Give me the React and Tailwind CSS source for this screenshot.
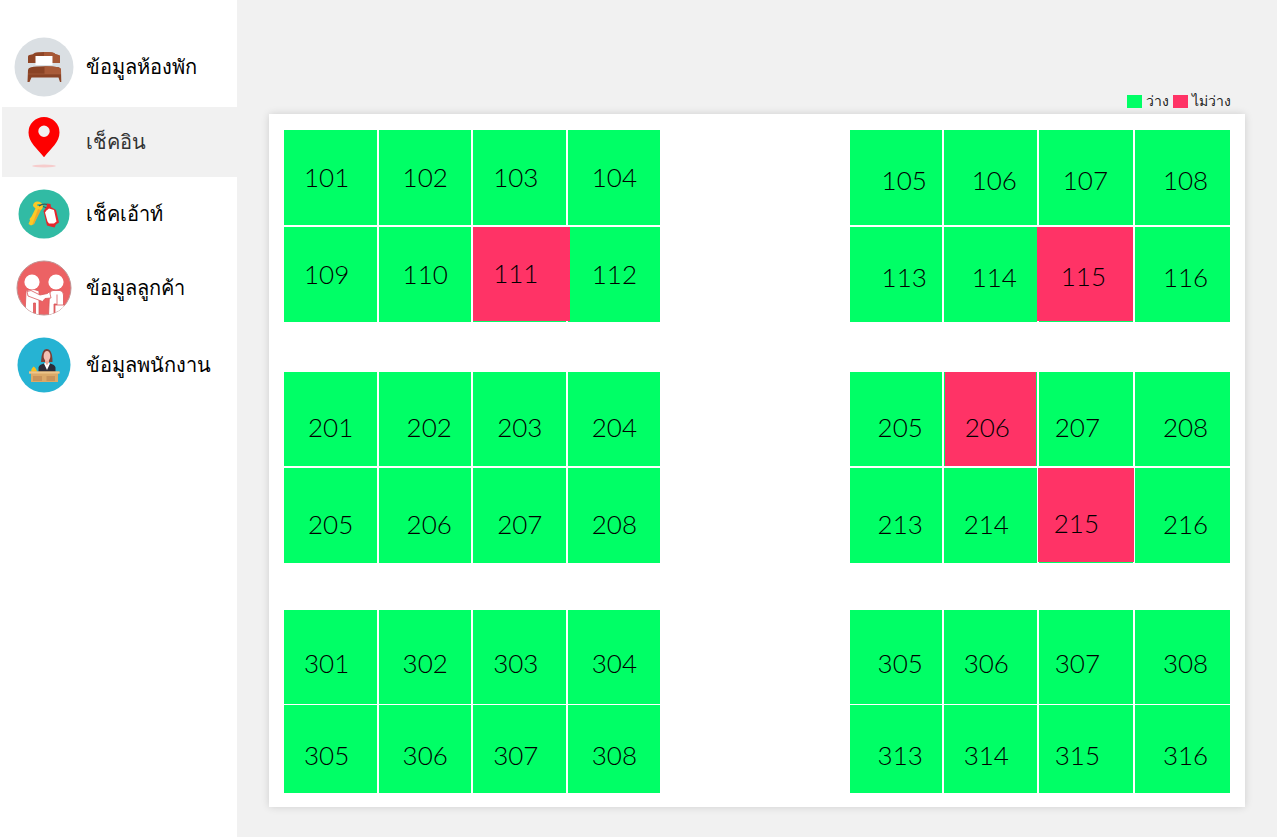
function BedIcon() {
  return (
    <svg viewBox="0 0 60 60" className="size-[60px]" aria-hidden="true">
      <circle cx="30" cy="30" r="29.5" fill="#dadfe3" />
      <path d="M14 26V19.5Q14 18 16.5 17.800Q19 17.500 20.5 16Q23 15 30 15Q37 15 40 16Q41.500 17.500 43.500 17.800Q46 18 46 19.500V26Z" fill="#8f4526" />
      <path d="M30 15Q37 15 40 16Q41.500 17.500 43.500 17.800Q46 18 46 19.500V26H38.500V19H30Z" fill="#a65735" />
      <rect x="21.500" y="19" width="17" height="9" fill="#fff" />
      <path d="M13.500 45L14 33Q14 31 17 30.200Q22 29.300 30.500 29.300Q39 29.300 44.500 30.200Q47 31 47 33L47.300 45H46L44.500 40.500H17.500L15.500 45Z" fill="#8a4325" />
      <path d="M30.500 29.300Q39 29.300 44.500 30.200Q47 31 47 33V37H30.500Z" fill="#a85a38" />
      <path d="M14 37H47" stroke="#a9633f" strokeWidth="0.600" />
    </svg>
  );
}

function PinIcon() {
  return (
    <svg viewBox="0 0 32 52" className="h-[52px] w-8" aria-hidden="true">
      <path fillRule="evenodd" d="M16 1A15.500 15.500 0 0 0 0.500 16.500C0.500 26 9 32.500 16 41.200C23 32.500 31.500 26 31.500 16.500A15.500 15.500 0 0 0 16 1ZM16 9.500A5.700 5.700 0 1 1 16 20.900A5.700 5.700 0 1 1 16 9.500Z" fill="#fe0000" />
      <ellipse cx="16" cy="50" rx="12" ry="1.500" fill="#f6cccc" />
    </svg>
  );
}

function KeyIcon() {
  return (
    <svg viewBox="0 0 52 50" className="h-[50px] w-[52px]" aria-hidden="true">
      <ellipse cx="26" cy="25" rx="25.500" ry="24.500" fill="#31bba4" />
      <path d="M15 17Q15 13 19 12.500Q24 12.500 25 17Q24.500 21 21.500 21.500L16 35L13 36.500L10.500 35L12 31.500L11.500 30L13.500 27.500L17.500 19.500Z" fill="#fbc926" />
      <path d="M20 20L14.500 35.500L16 35L23 21Z" fill="#f0a92c" />
      <ellipse cx="21" cy="16" rx="2" ry="1" fill="#31bba4" />
      <path d="M21 17Q25 14 31 16M25 17.500L29 19" fill="none" stroke="#3f5a55" strokeWidth="1.300" />
      <path d="M29 14.500L32.500 15L33 18L38 21L41 33.500L38 35.500L36.500 38.500L32.500 37.500L29 36.500L25.500 22L28.500 18Z" fill="#e3262c" />
      <path d="M28.500 21.500L31 19.500L36 21L38.500 32.500L36 34.500L31 34.500L29.500 32.500L27 23.500Z" fill="#fff" />
    </svg>
  );
}

function CustomersIcon() {
  return (
    <svg viewBox="0 0 56 56" className="size-14" aria-hidden="true">
      <defs>
        <clipPath id="customers-disc"><circle cx="28" cy="28" r="27" /></clipPath>
      </defs>
      <circle cx="28" cy="28" r="27" fill="#ec6264" stroke="#c09494" />
      <g clipPath="url(#customers-disc)" fill="#fff" stroke="#d9585b" strokeWidth="0.800">
        <path d="M10 31Q12 29.500 18 29.500L23 31V56H19.500V43H17.500V56H9Z" />
        <path d="M33.500 34Q34 30.500 37 30.500H44Q47.500 31 47.500 35V56H40.500V44H38V56H32.500Z" />
        <path d="M11 31.500L15 30.500L24 35L31.500 33.500L33.500 31.500L35 38L29 38.500L26.500 41.500L12 36Z" />
        <path d="M39 45H49V56H39ZM41 34.500V45" />
      </g>
      <g fill="#fff">
        <circle cx="16" cy="22" r="7.600" />
        <circle cx="40" cy="22" r="7.600" />
      </g>
    </svg>
  );
}

function StaffIcon() {
  return (
    <svg viewBox="0 0 54 56" className="h-14 w-[54px]" aria-hidden="true">
      <ellipse cx="27" cy="28" rx="26.500" ry="27.500" fill="#26b3d3" />
      <path d="M24 25Q24.500 12 29.500 12Q35.500 12 35.500 25Z" fill="#7d3f35" />
      <path d="M28 22H32V30H28Z" fill="#eaa899" />
      <ellipse cx="30" cy="19" rx="3.400" ry="5" fill="#f3bfb2" />
      <path d="M21.500 35V30.500Q22 27.500 27 26.500L30 31L33 26.500Q38 27.500 38.500 30.500V35Z" fill="#2c2c39" />
      <path d="M27 26.500L30 33L33 26.500L31.500 26L30 28.500L28.500 26Z" fill="#fff" />
      <path d="M14 35Q14 31.500 16.500 29.500Q19.500 31 20 35Z" fill="#f8c120" />
      <path d="M12 34.500H42.500V36.500H41V45H14V36.500H12Z" fill="#dba968" />
      <path d="M12 34.500H42.500V36.500H12Z" fill="#edc58a" />
      <path d="M16 39H25V44H16ZM29.500 39H38V44H29.500Z" fill="#c8935a" />
    </svg>
  );
}

const menu = [
  { label: "ข้อมูลห้องพัก", Icon: BedIcon, height: "h-20" },
  { label: "เช็คอิน", Icon: PinIcon, height: "h-[70px]", active: true },
  { label: "เช็คเอ้าท์", Icon: KeyIcon, height: "h-[73px]" },
  { label: "ข้อมูลลูกค้า", Icon: CustomersIcon, height: "h-[75px]" },
  { label: "ข้อมูลพนักงาน", Icon: StaffIcon, height: "h-20" },
];

const LEFT = "grid-cols-4";
const RIGHT = "grid-cols-[92fr_93fr_94fr_95fr]";

const blocks = [
  { cols: LEFT, rows: "grid-rows-[95px_95px] gap-y-0.5", pads: ["pl-5", "pl-6", "pl-5", "pl-6"], top: "pb-0.5", rooms: [101, 102, 103, 104, 109, 110, 111, 112] },
  { cols: RIGHT, rows: "grid-rows-[95px_95px] gap-y-0.5", pads: ["pl-8", "pl-7", "pl-6", "pl-7"], top: "pt-1", rooms: [105, 106, 107, 108, 113, 114, 115, 116] },
  { cols: LEFT, rows: "grid-rows-[94px_95px] gap-y-0.5", pads: ["pl-6", "pl-7", "pl-6", "pl-6"], top: "pt-4", rooms: [201, 202, 203, 204, 205, 206, 207, 208] },
  { cols: RIGHT, rows: "grid-rows-[94px_95px] gap-y-0.5", pads: ["pl-7", "pl-5", "pl-4", "pl-7"], top: "pt-4", rooms: [205, 206, 207, 208, 213, 214, 215, 216] },
  { cols: LEFT, rows: "grid-rows-[94px_88px] gap-y-px", pads: ["pl-5", "pl-6", "pl-5", "pl-6"], top: "pt-3", rooms: [301, 302, 303, 304, 305, 306, 307, 308] },
  { cols: RIGHT, rows: "grid-rows-[94px_88px] gap-y-px", pads: ["pl-7", "pl-5", "pl-4", "pl-7"], top: "pt-3", rooms: [305, 306, 307, 308, 313, 314, 315, 316] },
];

// Occupied rooms, keyed by "block-room", with the extent of their marker.
const occupied = {
  "0-111": "mb-px -mr-1",
  "1-115": "mb-px -ml-0.5",
  "3-206": "mx-px",
  "3-215": "mb-px -mr-px -ml-px",
};

function Block({ block, index }) {
  return (
    <div className={`grid gap-x-0.5 ${block.cols} ${block.rows}`}>
      {block.rooms.map((room, i) => {
        const mark = occupied[`${index}-${room}`];
        return (
          <div key={room} className={`flex bg-[#00ff66] ${mark ? "relative z-10" : ""}`}>
            <button
              type="button"
              className={`flex flex-1 cursor-pointer items-center text-[26px] leading-8 font-light text-black ${block.pads[i % 4]} ${block.top} ${mark ? `bg-[#ff3366] ${mark}` : ""}`}
            >
              {room}
            </button>
          </div>
        );
      })}
    </div>
  );
}

export default function App() {
  return (
    <div className="flex min-h-screen bg-[#f1f1f1] font-['Lato','Liberation_Sans',sans-serif] text-black">
      <aside className="w-[237px] shrink-0 bg-white pt-[27px]">
        <nav>
          {menu.map(({ label, Icon, height, active }) => (
            <a
              key={label}
              href="#"
              aria-current={active ? "page" : undefined}
              className={`flex items-center ${height} ${active ? "ml-0.5 bg-[#f1f1f1] text-[#333]" : "pl-0.5"}`}
            >
              <span className="flex w-[84px] shrink-0 justify-center">
                <Icon />
              </span>
              <span className="font-['Liberation_Sans',sans-serif] text-xl font-light">{label}</span>
            </a>
          ))}
        </nav>
      </aside>

      <main className="min-w-0 flex-1 pt-[90px] pr-8 pb-[30px] pl-8">
        <div className="mb-0.5 flex h-[22px] items-center justify-end gap-1 pr-3.5 font-['Liberation_Sans',sans-serif] text-sm font-light text-[#222]">
          <span className="h-[13px] w-[15px] bg-[#00ff66]" />
          <span>ว่าง</span>
          <span className="h-[13px] w-[15px] bg-[#ff3366]" />
          <span>ไม่ว่าง</span>
        </div>
        <section className="grid grid-cols-[376fr_380fr] gap-x-[20%] bg-white px-[15px] pt-4 pb-3.5 shadow-[0_0_8px_rgba(0,0,0,0.14)]">
          {blocks.map((block, index) => (
            <div key={index} className={index > 3 ? "pt-[47px]" : index > 1 ? "pt-[50px]" : ""}>
              <Block block={block} index={index} />
            </div>
          ))}
        </section>
      </main>
    </div>
  );
}
